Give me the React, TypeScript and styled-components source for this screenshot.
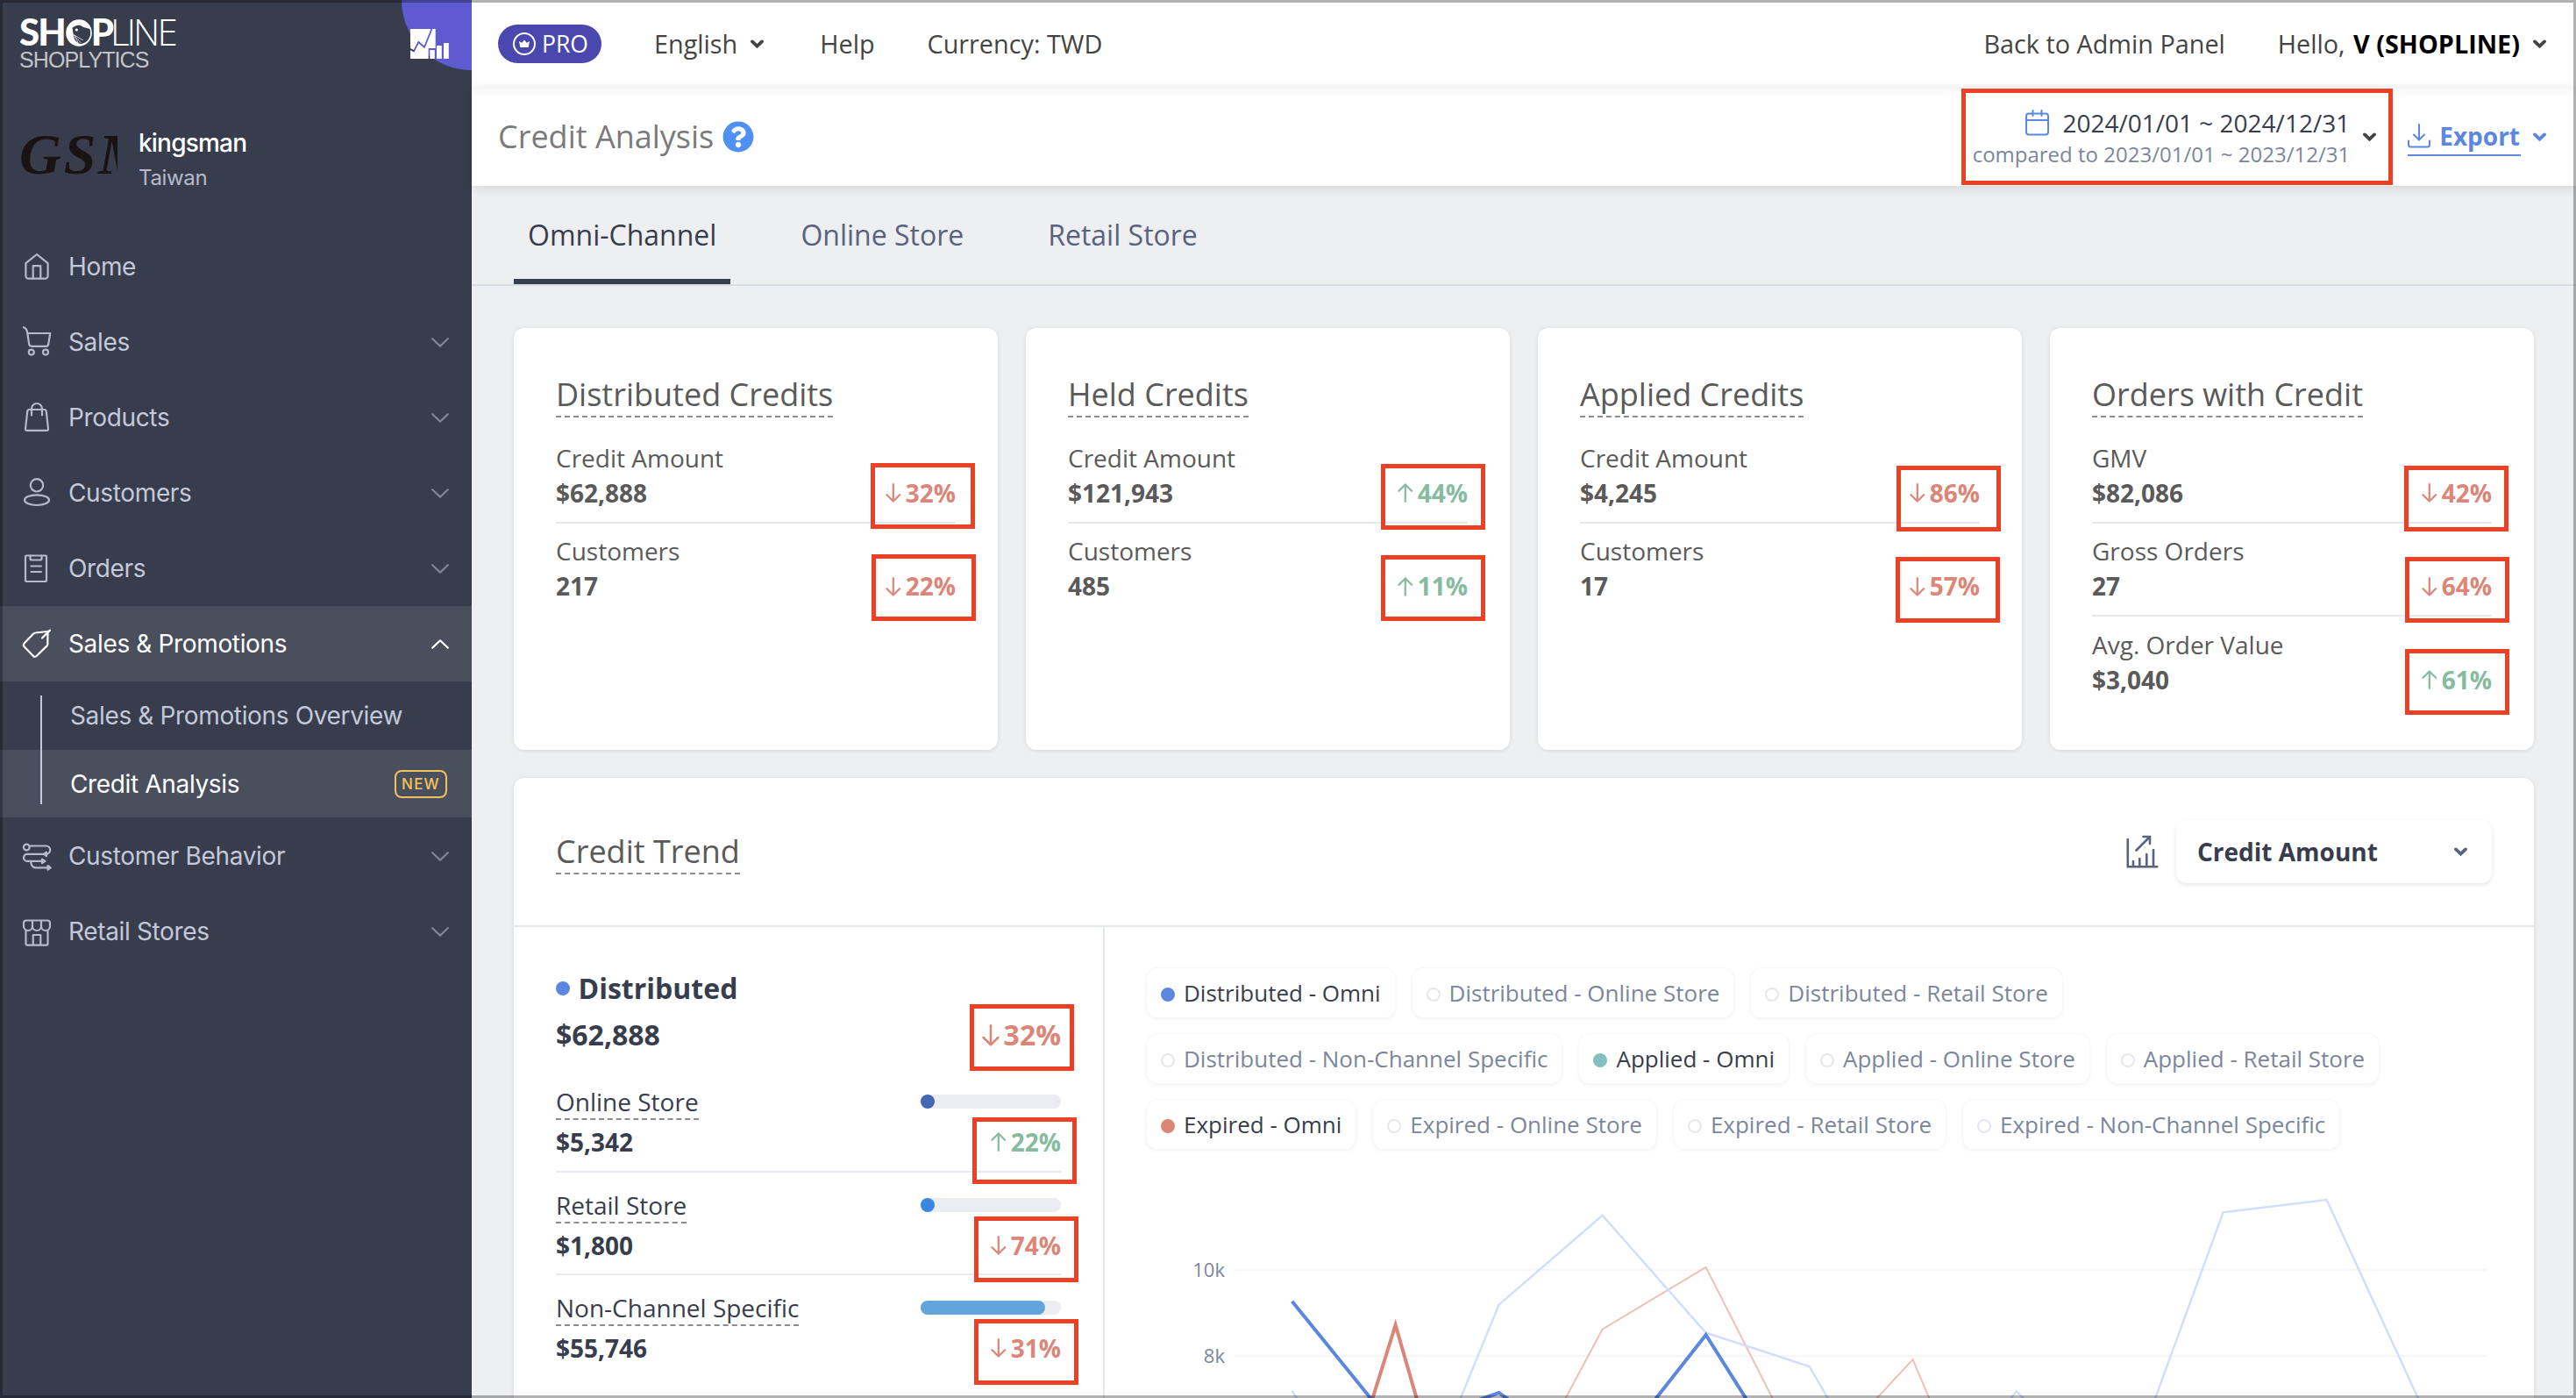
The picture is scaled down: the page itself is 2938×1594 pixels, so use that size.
import React from 'react';
import styled, { createGlobalStyle } from 'styled-components';
import { FaQuestionCircle } from 'react-icons/fa';

const GlobalStyle = createGlobalStyle`
  * {
    box-sizing: border-box;
  }

  body {
    margin: 0;
    background: #eeeff1;
    font-family: 'Open Sans', 'Noto Sans', sans-serif;
    overflow: hidden;
  }

  svg {
    display: block;
    flex-shrink: 0;
  }
`;

const RED = '#db8678';
const GREEN = '#86bba1';
const BLUE = '#5c87df';

const Page = styled.div`
  position: relative;
  display: flex;
  width: 2938px;
  height: 1594px;
  overflow: hidden;

  &::after {
    content: '';
    position: absolute;
    inset: 0;
    border: 3px solid rgba(0, 0, 0, 0.3);
    pointer-events: none;
  }
`;

/* ---------- sidebar ---------- */

const Sidebar = styled.aside`
  width: 538px;
  flex-shrink: 0;
  background: #383d4d;
  font-family: Inter, 'Liberation Sans', sans-serif;
  letter-spacing: -0.35px;
`;

const Brand = styled.div`
  position: relative;
  height: 132px;
  padding: 13px 0 0 22px;
  overflow: hidden;
`;

const BrandName = styled.div`
  display: flex;
  height: 43px;
  line-height: 46px;
  font-size: 42px;
  color: #ffffff;
`;

const BrandBold = styled.span`
  display: flex;
  font-family: Lato, sans-serif;
  font-weight: 900;
  letter-spacing: -2px;
`;

const BrandThin = styled.span`
  margin-left: -2px;
  font-family: 'Open Sans', sans-serif;
  font-weight: 300;
  letter-spacing: -3px;
`;

const CamelSlot = styled.span`
  position: relative;
  width: 30px;
  margin: 0 -1px 0 1px;
  font-size: 36px;
  text-align: center;
  letter-spacing: 0;

  svg {
    position: absolute;
    left: 0;
    top: 9px;
  }
`;

const BrandSub = styled.div`
  font-family: 'Liberation Sans', Arial, sans-serif;
  font-size: 25px;
  line-height: 25px;
  letter-spacing: -0.9px;
  color: #c2c4c8;
`;

const BrandBadge = styled.div`
  position: absolute;
  top: -80px;
  right: -80px;
  width: 160px;
  height: 160px;
  border-radius: 50%;
  background: #5d5bcf;

  svg {
    position: absolute;
    left: 10px;
    top: 113px;
  }
`;

const Store = styled.div`
  display: flex;
  align-items: center;
  height: 129px;
  padding: 0 0 30px 22px;
`;

const StoreLogo = styled.div`
  width: 112px;
  height: 46px;
  margin: -12px 24px 0 0;
  overflow: hidden;
  font-family: 'Liberation Serif', serif;
  font-style: italic;
  font-weight: bold;
  font-size: 66px;
  line-height: 46px;
  letter-spacing: 3px;
  color: #1a1314;
  white-space: nowrap;
`;

const StoreName = styled.div`
  padding-top: 2px;
  font-size: 28px;
  line-height: 40px;
  font-weight: 500;
  letter-spacing: -0.8px;
  color: #ffffff;
`;

const StoreCountry = styled.div`
  font-size: 24px;
  line-height: 40px;
  color: #b4bacb;
`;

const NavItem = styled.div<{ $active?: boolean }>`
  display: flex;
  align-items: center;
  height: 86px;
  padding: 0 26px 0 24px;
  background: ${({ $active }) => ($active ? '#4a4f5d' : 'transparent')};
  color: ${({ $active }) => ($active ? '#ffffff' : '#b4bacb')};
`;

const NavLabel = styled.span<{ $active?: boolean }>`
  flex: 1;
  margin-left: 18px;
  font-size: 28px;
  color: ${({ $active }) => ($active ? '#ffffff' : '#c3c9da')};
`;

const NavToggle = styled.svg<{ $active?: boolean }>`
  stroke: ${({ $active }) => ($active ? '#ffffff' : '#7f8596')};
`;

const SubMenu = styled.div`
  position: relative;
  height: 156px;

  &::after {
    content: '';
    position: absolute;
    left: 46px;
    top: 16px;
    bottom: 16px;
    width: 2px;
    background: #c3c9da;
  }
`;

const SubItem = styled.div<{ $active?: boolean }>`
  display: flex;
  align-items: center;
  justify-content: space-between;
  height: 78px;
  padding: 0 28px 0 80px;
  font-size: 28px;
  background: ${({ $active }) => ($active ? '#4a4f5d' : 'transparent')};
  color: ${({ $active }) => ($active ? '#ffffff' : '#c3c9da')};

  & + & {
    height: 77px;
  }
`;

const NewTag = styled.span`
  width: 60px;
  height: 32px;
  border: 2px solid #f3c25c;
  border-radius: 8px;
  font-size: 17px;
  font-weight: 500;
  line-height: 28px;
  letter-spacing: 1.2px;
  text-align: center;
  color: #f3c25c;
`;

/* ---------- top bars ---------- */

const Main = styled.main`
  display: flex;
  flex-direction: column;
  width: 2400px;
`;

const TopBar = styled.header`
  display: flex;
  align-items: center;
  gap: 60px;
  height: 100px;
  flex-shrink: 0;
  padding: 0 34px 0 30px;
  background: #ffffff;
  font-size: 28.8px;
  color: #444444;
`;

const ProPill = styled.div`
  display: flex;
  align-items: center;
  gap: 7px;
  width: 118px;
  height: 44px;
  padding-left: 17px;
  border-radius: 22px;
  background: #4a48ae;
  font-size: 26.5px;
  line-height: 42px;
  color: #ffffff;
`;

const MenuText = styled.div`
  display: flex;
  align-items: center;
  gap: 15px;
  padding-bottom: 1px;

  b {
    margin-left: 2px;
    color: #000000;
  }
`;

const LanguageMenu = styled(MenuText)`
  padding-right: 4px;
`;

const Spacer = styled.div`
  flex: 1;
`;

const TitleBar = styled.div`
  display: flex;
  align-items: center;
  height: 112px;
  flex-shrink: 0;
  padding: 0 34px 0 30px;
  background: linear-gradient(#f7f7f7, #ffffff 10px);
  box-shadow: 0 2px 12px rgba(0, 0, 0, 0.12);
`;

const PageTitle = styled.h1`
  margin: 0 10px 2px 0;
  font-size: 36px;
  font-weight: 400;
  color: #7b7b7b;
`;

const DatePicker = styled.div`
  position: relative;
  display: flex;
  align-items: center;
  gap: 15px;
  height: 112px;
  margin-right: 36px;
`;

const DateText = styled.div`
  display: flex;
  flex-direction: column;
  align-items: flex-end;
  padding-top: 2px;
`;

const DateRange = styled.div`
  display: flex;
  align-items: center;
  gap: 15px;
  font-size: 28px;
  line-height: 38px;
  color: #383d4d;
`;

const DateCompare = styled.div`
  font-size: 24px;
  line-height: 34px;
  color: #7c869b;
`;

const ExportLink = styled.div`
  display: flex;
  align-items: center;
  gap: 10px;
  height: 44px;
  margin-right: 14px;
  padding-right: 1px;
  border-bottom: 2px solid ${BLUE};
  font-size: 28px;
  font-weight: 700;
  color: ${BLUE};
`;

const Tabs = styled.nav`
  display: flex;
  gap: 64px;
  height: 114px;
  flex-shrink: 0;
  padding-left: 48px;
  border-bottom: 2px solid #d5dde6;
`;

const Tab = styled.div<{ $active?: boolean }>`
  padding: 34px 16px 0;
  border-bottom: 6px solid ${({ $active }) => ($active ? '#383d4d' : 'transparent')};
  font-size: 32px;
  line-height: 44px;
  color: ${({ $active }) => ($active ? '#383d4d' : '#59627f')};
`;

/* ---------- cards ---------- */

const Content = styled.section`
  display: flex;
  flex-direction: column;
  gap: 32px;
  padding: 48px 48px 0;
`;

const CardGrid = styled.div`
  display: grid;
  grid-template-columns: repeat(4, 1fr);
  gap: 32px;
`;

const Card = styled.div`
  border-radius: 12px;
  background: #ffffff;
  box-shadow: 0 1px 5px rgba(0, 0, 0, 0.1);
`;

const SummaryBox = styled(Card)`
  height: 481px;
  padding: 50px 48px 0;
`;

const Heading = styled.h2`
  width: fit-content;
  margin: 0;
  padding-top: 2px;
  border-bottom: 2px dashed #8c8c8c;
  font-size: 36px;
  font-weight: 400;
  line-height: 48px;
  color: #5a5a5a;
`;

const Metrics = styled.div`
  margin-top: 14px;
`;

const Metric = styled.div`
  padding: 11.5px 0 12px;
  font-size: 28px;
  line-height: 40px;
  color: #5a5a5a;

  & + & {
    border-top: 2px solid #e6e7f0;
  }
`;

const ValueLine = styled.div`
  display: flex;
  justify-content: space-between;
  font-weight: 700;
  line-height: 41px;
`;

const DeltaBox = styled.div<{ $up: boolean }>`
  position: relative;
  display: flex;
  align-items: center;
  gap: 5px;
  font-weight: 700;
  color: ${({ $up }) => ($up ? GREEN : RED)};
`;

/* highlight frame drawn over a value */
const Frame = styled.div<{ $right: number; $top: number }>`
  position: absolute;
  right: ${({ $right }) => -$right}px;
  top: ${({ $top }) => -$top}px;
  width: 119px;
  height: 75.5px;
  border: 5px solid #ec4125;
`;

const DateFrame = styled(Frame)`
  left: -13px;
  width: auto;
  height: 110px;
`;

/* ---------- trend ---------- */

const TrendCard = styled(Card)`
  height: 800px;
`;

const TrendHead = styled.div`
  display: flex;
  align-items: center;
  height: 170px;
  padding: 0 48px;
  border-bottom: 2px solid #e4e9ef;
`;

const Select = styled.div`
  display: flex;
  align-items: center;
  justify-content: space-between;
  width: 360px;
  height: 72px;
  margin-left: 20px;
  padding: 0 28px 0 24px;
  border-radius: 12px;
  box-shadow: 0 2px 5px rgba(0, 0, 0, 0.1);
  font-size: 28px;
  font-weight: 700;
  color: #383d4d;
`;

const TrendBody = styled.div`
  display: flex;
  height: 630px;
`;

const Breakdown = styled.div`
  width: 674px;
  flex-shrink: 0;
  padding: 44px 48px 0;
  border-right: 2px solid #e4e9ef;
  color: #383d4d;
`;

const BreakdownTitle = styled.div`
  display: flex;
  align-items: center;
  gap: 9.5px;
  font-size: 32px;
  font-weight: 700;
  line-height: 52px;
`;

const Total = styled(ValueLine)`
  margin: 1px 0 31px;
  font-size: 32px;
  line-height: 52px;
`;

const Channel = styled.div`
  padding-bottom: 12.5px;
  font-size: 28px;

  & + & {
    padding-top: 18px;
    border-top: 2px solid #e6e9f0;
  }
`;

const ChannelTop = styled.div`
  display: flex;
  align-items: center;
  justify-content: space-between;
  margin-bottom: 5px;
`;

const ChannelName = styled.span`
  border-bottom: 2px dashed #8c8c8c;
  line-height: 38px;
`;

const ChannelValue = styled(ValueLine)`
  line-height: 40px;
`;

const Track = styled.div`
  width: 160px;
  height: 16px;
  margin-bottom: 2px;
  border-radius: 8px;
  background: #ecedf0;
`;

const Fill = styled.div<{ $color: string }>`
  min-width: 16px;
  height: 16px;
  border-radius: 8px;
  background: ${({ $color }) => $color};
`;

const Dot = styled.span<{ $color?: string }>`
  width: 16px;
  height: 16px;
  flex-shrink: 0;
  border: 2px solid ${({ $color }) => $color || '#e5e7ef'};
  border-radius: 50%;
  background: ${({ $color }) => $color || '#ffffff'};
`;

const ChartPanel = styled.div`
  flex: 1;
  padding: 47px 48px 0;
`;

const Legend = styled.div`
  display: flex;
  flex-wrap: wrap;
  gap: 19px 20px;
  max-width: 1520px;
`;

const Chip = styled.div<{ $on: boolean }>`
  display: flex;
  align-items: center;
  gap: 10px;
  height: 56px;
  padding: 0 16px;
  border-radius: 12px;
  box-shadow: 0 0 0 1px #f7f7f8, 0 2px 5px rgba(0, 0, 0, 0.05);
  font-size: 26px;
  line-height: 54px;
  color: ${({ $on }) => ($on ? '#383d4d' : '#7c869b')};

  ${Dot} {
    margin-top: 4px;
  }
`;

const ChartArea = styled.div`
  margin-top: 32px;
`;

/* ---------- icons ---------- */

const icons: Record<string, React.ReactNode> = {
  home: (
    <>
      <path d="M5.4 14.2 18 4l12.6 10.2v14.5a3 3 0 0 1-3 3H8.4a3 3 0 0 1-3-3z" />
      <path d="M13.7 31.5V17.2h8.6v14.3" />
    </>
  ),
  cart: (
    <>
      <path d="M2.8 1.2C5.6 2 6.9 3.6 7.3 8l1.9 12.4q.4 2.4 2.8 2.4h16.6q2.3 0 2.6-2.4L33.2 8H7.3" />
      <circle cx="11.8" cy="29.6" r="3" />
      <circle cx="28" cy="29.6" r="3" />
    </>
  ),
  bag: (
    <>
      <path d="m5 31 2.3-20.4Q7.5 9 9.2 9h17.6q1.7 0 1.9 1.6L31 31q.1 1.9-1.8 1.9H6.8Q4.9 32.9 5 31z" />
      <path d="M12 15.5V8a6 6 0 0 1 12 0v7.5" />
    </>
  ),
  user: (
    <>
      <circle cx="18" cy="9.3" r="7.2" />
      <ellipse cx="18" cy="26.2" rx="14" ry="5.8" />
    </>
  ),
  orders: (
    <>
      <rect x="5" y="3.5" width="24" height="29.5" rx="1" />
      <path d="M10.5 3.5V7q0 1.5 1.5 1.5h10q1.5 0 1.5-1.5V3.5M11.5 15.5H23M11.5 22H23" />
    </>
  ),
  tag: (
    <>
      <path d="M3.6 17.6 14.2 6.6q.9-1 2.3-1.1l14-1.5-.2 14.2q0 1.4-1 2.4L17.6 32q-1.8 1.6-3.6.1L3.8 21.5q-1.9-1.9-.2-3.900z" />
      <path d="M24 11.5 33 2.6" />
    </>
  ),
  behavior: (
    <>
      <circle cx="6.3" cy="8" r="3.4" />
      <path d="M10 6.5h18.5a4.700 4.700 0 0 1 0 9.400H7a4 4 0 0 0 0 8h19M11 24q1 7.300 5.500 7.300H33" />
      <path d="m29 13.7-3 2.2 3 2.2zM24 21.6l3.5 2.3-3.5 2.3zM30.5 29l3.2 2.3-3.2 2.3z" />
    </>
  ),
  store: (
    <>
      <path d="M3 12V8.5q0-3 3-3h24q3 0 3 3V12a5 5 0 0 1-10 0 5 5 0 0 1-10 0 5 5 0 0 1-10 0zM13 5.5V12M23 5.5V12" />
      <path d="M5.5 17v15q0 1.7 1.7 1.7h21.600q1.700 0 1.700-1.700V17M13.700 33.500V22h8.600v11.500" />
    </>
  ),
};

const NavIcon = ({ name }: { name: string }) => (
  <svg
    width="36"
    height="36"
    viewBox="0 0 36 36"
    fill="none"
    stroke="currentColor"
    strokeWidth="2.2"
    strokeLinecap="round"
    strokeLinejoin="round"
  >
    {icons[name]}
  </svg>
);

const Chevron = ({ color = '#444444' }: { color?: string }) => (
  <svg width="15" height="10" viewBox="0 0 15 10" fill="none">
    <path d="M2 2.4 7.5 7.6 13 2.4" stroke={color} strokeWidth="3.8" strokeLinecap="round" />
  </svg>
);

const Camel = () => (
  <svg width="30" height="31" viewBox="0 0 30 31">
    <ellipse cx="15" cy="15.5" rx="14.8" ry="15.2" fill="#ffffff" />
    <path d="M7.5 9.5Q12 6.500 15.500 6.500q5 3.500 12 4.500 1.800 7-1.700 12-3.300 4.500-8.800 5.200Q10.500 26.500 9 19.500z" fill="#383d4d" />
    <circle cx="12.3" cy="12" r="1.6" fill="#ffffff" />
    <path d="m9 17.500 11 6.500M9.500 18.500l8 8.500M9.500 18l5 9.500" stroke="#ffffff" strokeWidth=".7" />
  </svg>
);

const BrandChart = () => (
  <svg width="44" height="34" viewBox="0 0 44 34">
    <path d="M0 0h28.7v22h-8v12H0z" fill="#ffffff" />
    <path d="m0 23 4 2.3L9.3 15l6.7 5.8L24.5 0" fill="none" stroke="#5d5bcf" strokeWidth="1.8" />
    <path d="m0 23 4 2.3" stroke="#383d4d" strokeWidth="1.8" />
    <path d="M22.3 24h5.5v10h-5.5zM30 19h5.8v15H30zM38 16h5.8v18H38z" fill="#ffffff" />
  </svg>
);

const Crown = () => (
  <svg width="26" height="26" viewBox="0 0 26 26">
    <circle cx="13" cy="13" r="12" fill="none" stroke="#ffffff" strokeWidth="2" />
    <path d="m7 10 3.3 1.7L13 8.5l2.7 3.2L19 10l-1.3 7H8.3z" fill="#ffffff" />
  </svg>
);

const CalendarIcon = () => (
  <svg width="27" height="30" viewBox="0 0 27 30" fill="none" stroke={BLUE} strokeWidth="2" strokeLinecap="round">
    <rect x="1" y="4.5" width="25" height="24" rx="3" />
    <path d="M1 12h25M8.5 1v6M18.5 1v6" />
  </svg>
);

const DownloadIcon = () => (
  <svg width="26" height="28" viewBox="0 0 26 28" fill="none" stroke={BLUE} strokeWidth="2" strokeLinecap="round">
    <path d="M13 1v17M7 12.5l6 6 6-6M1 19.5V24q0 2.5 2.5 2.5h19Q25 26.5 25 24v-4.5" />
  </svg>
);

const TrendIcon = () => (
  <svg width="37" height="38" viewBox="0 0 37 38" fill="none" stroke="#59627f" strokeWidth="2.6" strokeLinecap="round">
    <path d="M1.8 5v31.2h33.5M8 35.5V30M15.3 35.5V27M23.3 35.5V22M31 35.5V17" />
    <path d="m11.5 17.5 15-15M19.5 2H27v8" />
  </svg>
);

const Arrow = ({ up, size = 22 }: { up: boolean; size?: number }) => (
  <svg
    width={size * 0.8}
    height={size}
    viewBox="0 0 18 22.5"
    fill="none"
    stroke={up ? GREEN : RED}
    strokeWidth="2.3"
    strokeLinecap="round"
    strokeLinejoin="round"
  >
    <path d={up ? 'M9 21.3V1.5M1.5 9 9 1.5 16.5 9' : 'M9 1.2V21M1.5 13.5 9 21l7.5-7.5'} />
  </svg>
);

/* ---------- data ---------- */

interface DeltaProps {
  up?: boolean;
  value: string;
  frame: [number, number];
  size?: number;
}

const summaries: {
  title: string;
  metrics: { label: string; value: string; delta: DeltaProps }[];
}[] = [
  {
    title: 'Distributed Credits',
    metrics: [
      { label: 'Credit Amount', value: '$62,888', delta: { value: '32%', frame: [21.5, 14] } },
      { label: 'Customers', value: '217', delta: { value: '22%', frame: [22.5, 16] } },
    ],
  },
  {
    title: 'Held Credits',
    metrics: [
      { label: 'Credit Amount', value: '$121,943', delta: { up: true, value: '44%', frame: [20, 13] } },
      { label: 'Customers', value: '485', delta: { up: true, value: '11%', frame: [20, 15.5] } },
    ],
  },
  {
    title: 'Applied Credits',
    metrics: [
      { label: 'Credit Amount', value: '$4,245', delta: { value: '86%', frame: [23.5, 11] } },
      { label: 'Customers', value: '17', delta: { value: '57%', frame: [22.5, 13.5] } },
    ],
  },
  {
    title: 'Orders with Credit',
    metrics: [
      { label: 'GMV', value: '$82,086', delta: { value: '42%', frame: [18.5, 11] } },
      { label: 'Gross Orders', value: '27', delta: { value: '64%', frame: [20, 13.5] } },
      { label: 'Avg. Order Value', value: '$3,040', delta: { up: true, value: '61%', frame: [20, 15] } },
    ],
  },
];

const channels: { name: string; value: string; share: number; color: string; delta: DeltaProps }[] = [
  { name: 'Online Store', value: '$5,342', share: 8.5, color: '#4567b1', delta: { up: true, value: '22%', frame: [18, 8] } },
  { name: 'Retail Store', value: '$1,800', share: 2.9, color: '#3b87df', delta: { value: '74%', frame: [19.5, 13] } },
  { name: 'Non-Channel Specific', value: '$55,746', share: 88.6, color: '#62a5dc', delta: { value: '31%', frame: [19.5, 13.5] } },
];

const legend: { label: string; color?: string }[] = [
  { label: 'Distributed - Omni', color: BLUE },
  { label: 'Distributed - Online Store' },
  { label: 'Distributed - Retail Store' },
  { label: 'Distributed - Non-Channel Specific' },
  { label: 'Applied - Omni', color: '#82bfbe' },
  { label: 'Applied - Online Store' },
  { label: 'Applied - Retail Store' },
  { label: 'Expired - Omni', color: RED },
  { label: 'Expired - Online Store' },
  { label: 'Expired - Retail Store' },
  { label: 'Expired - Non-Channel Specific' },
];

// values in thousands, first point is January unless `from` is set
const series: { color: string; width: number; from?: number; values: number[] }[] = [
  { color: '#eec0b8', width: 2, from: 2, values: [4.14, 8.62, 10.06, 5.34, 7.92, 2.27] },
  { color: '#d0defc', width: 2.4, values: [7.2, 3.35, 9.19, 11.26, 8.54, 7.76, 3.65, 7.19, 4.77, 11.33, 11.62, 6.42] },
  { color: RED, width: 4, values: [1.03, 8.72, 0.38] },
  { color: BLUE, width: 4, values: [9.27, 6.31, 7.15, 5.44, 8.49, 4.69] },
];

const CHART_TOP_VALUE = 12.15;
const STEP_X = 118;
const STEP_Y = 49.2;

const yOf = (value: number) => (CHART_TOP_VALUE - value) * STEP_Y;

/* ---------- components ---------- */

const Delta = ({ up = false, value, frame, size }: DeltaProps) => (
  <DeltaBox $up={up}>
    <Arrow up={up} size={size} />
    {value}
    <Frame $right={frame[0]} $top={frame[1]} />
  </DeltaBox>
);

const Nav = ({ icon, label, active }: { icon: string; label: string; active?: boolean }) => (
  <NavItem $active={active}>
    <NavIcon name={icon} />
    <NavLabel $active={active}>{label}</NavLabel>
    {icon !== 'home' && (
      <NavToggle
        $active={active}
        width="20"
        height="11"
        viewBox="0 0 20 11"
        fill="none"
        strokeWidth="2.2"
        strokeLinecap="round"
        strokeLinejoin="round"
      >
        <path d={active ? 'M1.2 9.6 10 1.2l8.8 8.4' : 'M1.2 1.2 10 9.6l8.8-8.4'} />
      </NavToggle>
    )}
  </NavItem>
);

const TrendChart = () => (
  <svg width="1534" height="270" viewBox="0 0 1534 270">
    {[10, 8].map((tick) => (
      <g key={tick}>
        <line x1="100" x2="1528" y1={yOf(tick)} y2={yOf(tick)} stroke="#f5f5f6" strokeWidth="2" />
        <text
          x="89"
          y={yOf(tick) + 8}
          textAnchor="end"
          fontFamily="Open Sans, sans-serif"
          fontSize="22"
          fill="#7c869b"
        >
          {tick}k
        </text>
      </g>
    ))}
    {series.map(({ color, width, from = 0, values }, i) => (
      <polyline
        key={i}
        fill="none"
        stroke={color}
        strokeWidth={width}
        points={values.map((v, n) => `${165.6 + (n + from) * STEP_X},${yOf(v)}`).join(' ')}
      />
    ))}
  </svg>
);

const App = () => (
  <Page>
    <GlobalStyle />
    <Sidebar>
      <Brand>
        <BrandName>
          <BrandBold>
            <span>SH</span>
            <CamelSlot>
              O<Camel />
            </CamelSlot>
            <span>P</span>
          </BrandBold>
          <BrandThin>LINE</BrandThin>
        </BrandName>
        <BrandSub>SHOPLYTICS</BrandSub>
        <BrandBadge>
          <BrandChart />
        </BrandBadge>
      </Brand>
      <Store>
        <StoreLogo>GSM</StoreLogo>
        <div>
          <StoreName>kingsman</StoreName>
          <StoreCountry>Taiwan</StoreCountry>
        </div>
      </Store>
      <Nav icon="home" label="Home" />
      <Nav icon="cart" label="Sales" />
      <Nav icon="bag" label="Products" />
      <Nav icon="user" label="Customers" />
      <Nav icon="orders" label="Orders" />
      <Nav icon="tag" label="Sales & Promotions" active />
      <SubMenu>
        <SubItem>Sales & Promotions Overview</SubItem>
        <SubItem $active>
          Credit Analysis
          <NewTag>NEW</NewTag>
        </SubItem>
      </SubMenu>
      <Nav icon="behavior" label="Customer Behavior" />
      <Nav icon="store" label="Retail Stores" />
    </Sidebar>

    <Main>
      <TopBar>
        <ProPill>
          <Crown />
          PRO
        </ProPill>
        <LanguageMenu>
          English
          <Chevron />
        </LanguageMenu>
        <MenuText>Help</MenuText>
        <MenuText>Currency: TWD</MenuText>
        <Spacer />
        <MenuText>Back to Admin Panel</MenuText>
        <MenuText>
          <span>
            Hello, <b>V (SHOPLINE)</b>
          </span>
          <Chevron />
        </MenuText>
      </TopBar>

      <TitleBar>
        <PageTitle>Credit Analysis</PageTitle>
        <FaQuestionCircle size={36} color="#4f90f5" />
        <Spacer />
        <DatePicker>
          <DateText>
            <DateRange>
              <CalendarIcon />
              2024/01/01 ~ 2024/12/31
            </DateRange>
            <DateCompare>compared to 2023/01/01 ~ 2023/12/31</DateCompare>
          </DateText>
          <Chevron />
          <DateFrame $right={19} $top={-1} />
        </DatePicker>
        <ExportLink>
          <DownloadIcon />
          Export
        </ExportLink>
        <Chevron color={BLUE} />
      </TitleBar>

      <Tabs>
        <Tab $active>Omni-Channel</Tab>
        <Tab>Online Store</Tab>
        <Tab>Retail Store</Tab>
      </Tabs>

      <Content>
        <CardGrid>
          {summaries.map(({ title, metrics }) => (
            <SummaryBox key={title}>
              <Heading>{title}</Heading>
              <Metrics>
                {metrics.map(({ label, value, delta }) => (
                  <Metric key={label}>
                    <div>{label}</div>
                    <ValueLine>
                      {value}
                      <Delta {...delta} />
                    </ValueLine>
                  </Metric>
                ))}
              </Metrics>
            </SummaryBox>
          ))}
        </CardGrid>

        <TrendCard>
          <TrendHead>
            <Heading>Credit Trend</Heading>
            <Spacer />
            <TrendIcon />
            <Select>
              Credit Amount
              <Chevron color="#59627f" />
            </Select>
          </TrendHead>
          <TrendBody>
            <Breakdown>
              <BreakdownTitle>
                <Dot $color={BLUE} />
                Distributed
              </BreakdownTitle>
              <Total>
                $62,888
                <Delta value="32%" frame={[14.5, 9]} size={25} />
              </Total>
              {channels.map(({ name, value, share, color, delta }) => (
                <Channel key={name}>
                  <ChannelTop>
                    <ChannelName>{name}</ChannelName>
                    <Track>
                      <Fill $color={color} style={{ width: `${share}%` }} />
                    </Track>
                  </ChannelTop>
                  <ChannelValue>
                    {value}
                    <Delta {...delta} />
                  </ChannelValue>
                </Channel>
              ))}
            </Breakdown>
            <ChartPanel>
              <Legend>
                {legend.map(({ label, color }) => (
                  <Chip key={label} $on={Boolean(color)}>
                    <Dot $color={color} />
                    {label}
                  </Chip>
                ))}
              </Legend>
              <ChartArea>
                <TrendChart />
              </ChartArea>
            </ChartPanel>
          </TrendBody>
        </TrendCard>
      </Content>
    </Main>
  </Page>
);

export default App;
